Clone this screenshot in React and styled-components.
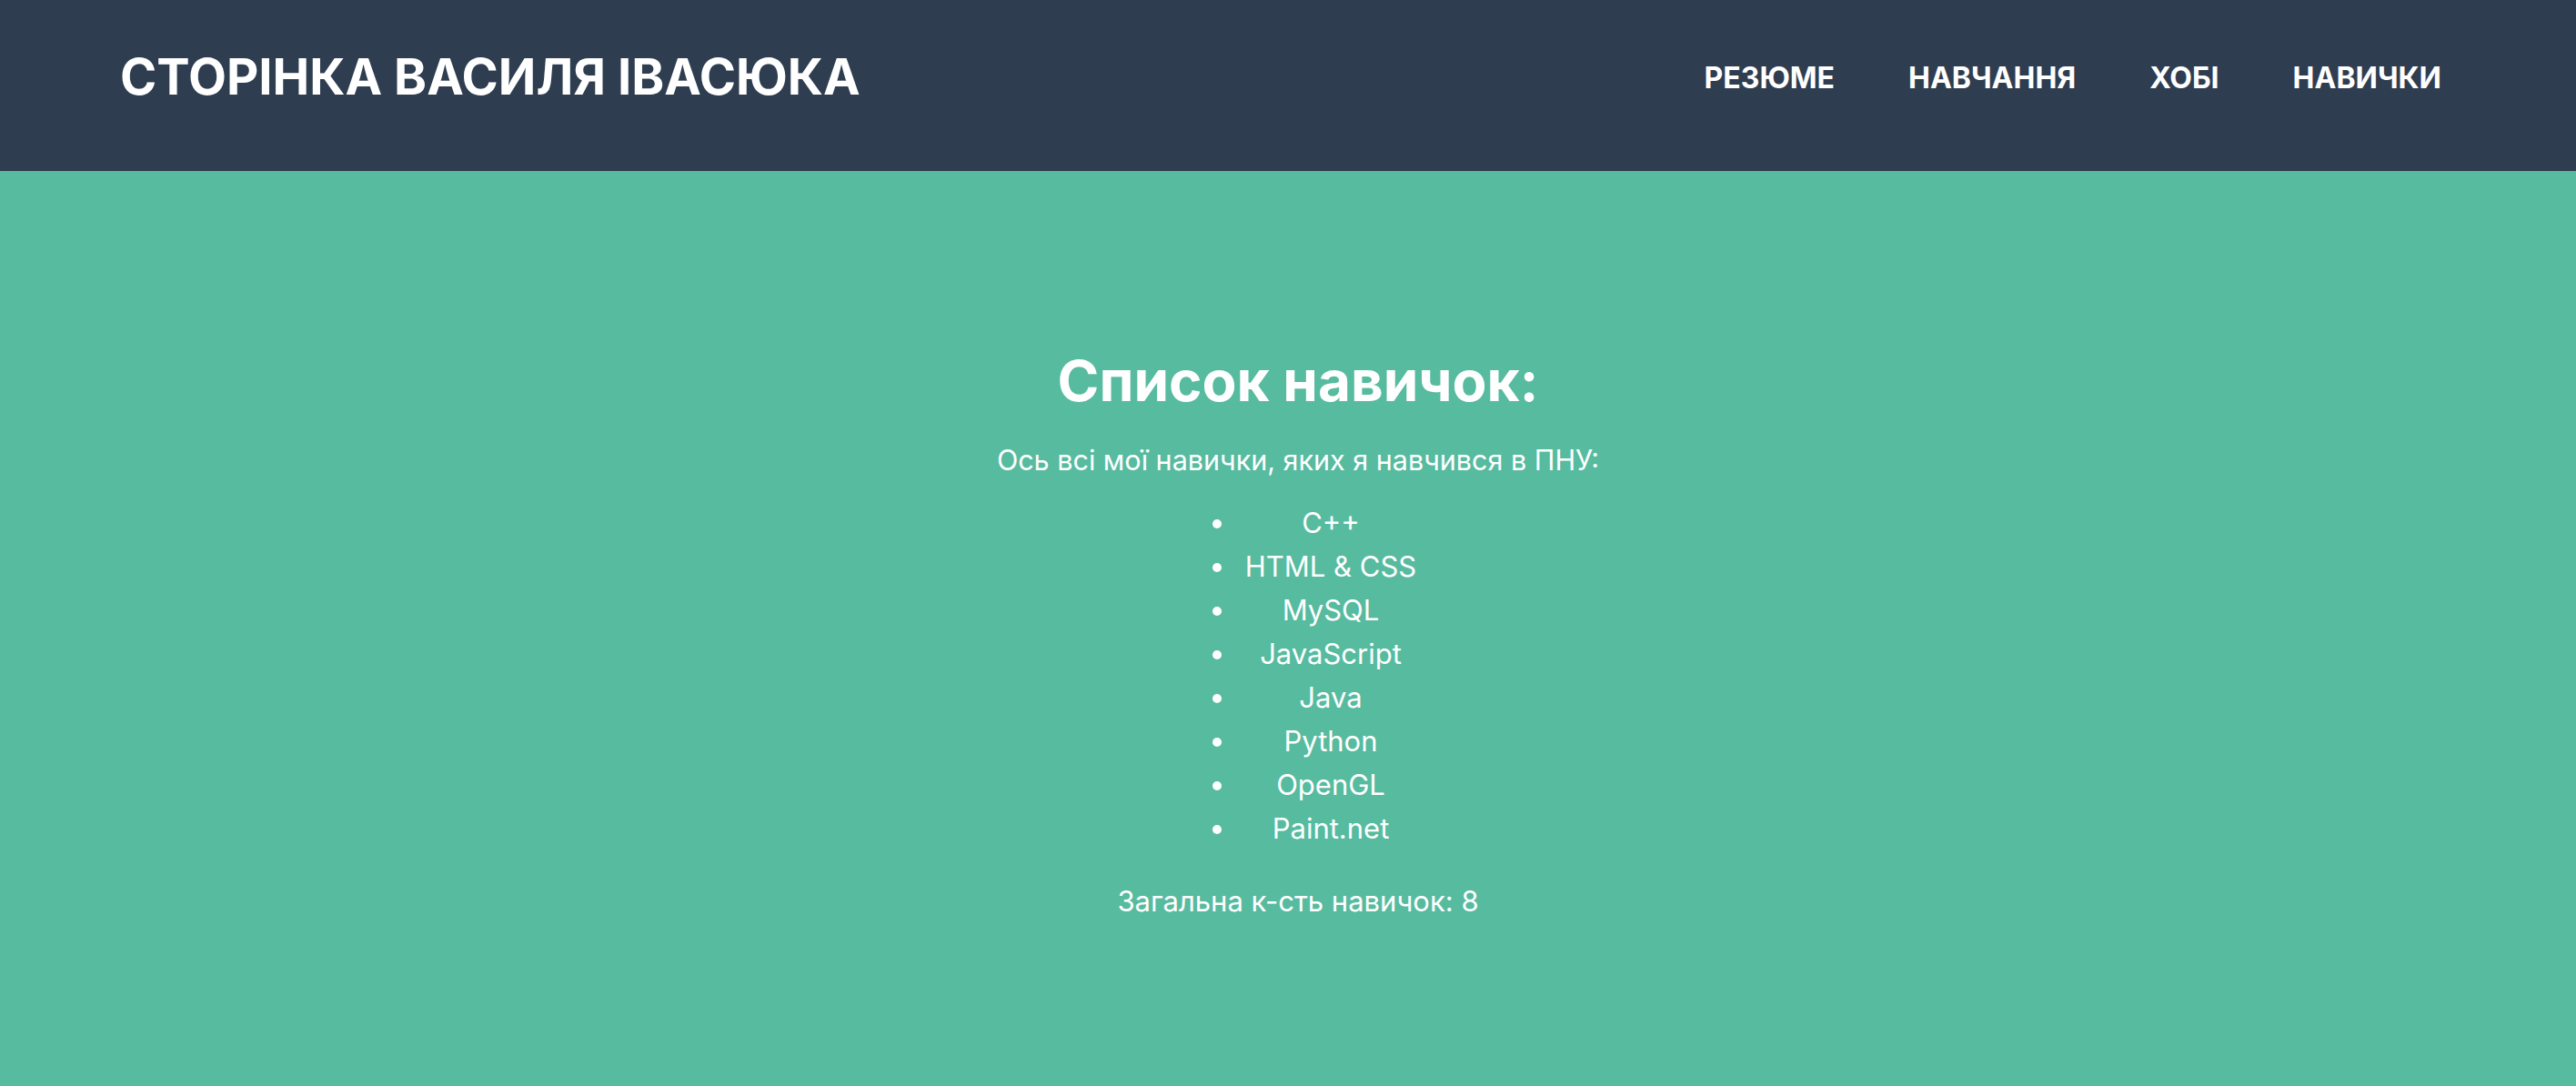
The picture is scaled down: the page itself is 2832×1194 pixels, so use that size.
import React from "react";
import styled, { createGlobalStyle } from "styled-components";

const GlobalStyle = createGlobalStyle`
  html, body {
    margin: 0;
    padding: 0;
    background-color: #57bb9f;
    font-family: Inter, "Noto Sans", sans-serif;
  }
`;

const Header = styled.header`
  box-sizing: border-box;
  height: 188px;
  padding: 0 148px 18px 132px;
  background-color: #2e3d50;
  display: flex;
  align-items: center;
  justify-content: space-between;
  color: white;
`;

const Title = styled.h1`
  margin: 0;
  font-size: 54.5px;
  font-weight: 700;
  line-height: 1.2;
`;

const Nav = styled.nav`
  display: flex;
  gap: 81px;
`;

const NavLink = styled.a`
  color: white;
  text-decoration: none;
  font-size: 32px;
  font-weight: 700;
  cursor: pointer;
`;

const Main = styled.main`
  min-height: calc(100vh - 188px);
  box-sizing: border-box;
  padding: 195px 0 0 22px;
  text-align: center;
  color: white;
`;

const Heading = styled.h2`
  margin: 0;
  font-size: 62px;
  font-weight: 700;
  line-height: 72px;
`;

const Text = styled.p`
  margin: ${(p) => p.$top || 0}px 0 0;
  font-size: ${(p) => p.$size || 30.5}px;
  line-height: 40px;
`;

const SkillList = styled.ul`
  display: inline-block;
  margin: 25.7px 0 0;
  padding-left: 63px;
  list-style: disc outside;
`;

const Skill = styled.li`
  padding-left: 9px;
  font-size: 31px;
  line-height: 48px;
`;

const skills = [
  "C++",
  "HTML & CSS",
  "MySQL",
  "JavaScript",
  "Java",
  "Python",
  "OpenGL",
  "Paint.net",
];

const App = () => {
  return (
    <>
      <GlobalStyle />
      <Header>
        <Title>СТОРІНКА ВАСИЛЯ ІВАСЮКА</Title>
        <Nav>
          <NavLink>РЕЗЮМЕ</NavLink>
          <NavLink>НАВЧАННЯ</NavLink>
          <NavLink>ХОБІ</NavLink>
          <NavLink>НАВИЧКИ</NavLink>
        </Nav>
      </Header>
      <Main>
        <Heading>Список навичок:</Heading>
        <Text $top={30.5}>Ось всі мої навички, яких я навчився в ПНУ:</Text>
        <div>
          <SkillList>
            {skills.map((s) => (
              <Skill key={s}>{s}</Skill>
            ))}
          </SkillList>
        </div>
        <Text $top={36} $size={31}>
          Загальна к-сть навичок: {skills.length}
        </Text>
      </Main>
    </>
  );
};

export default App;
